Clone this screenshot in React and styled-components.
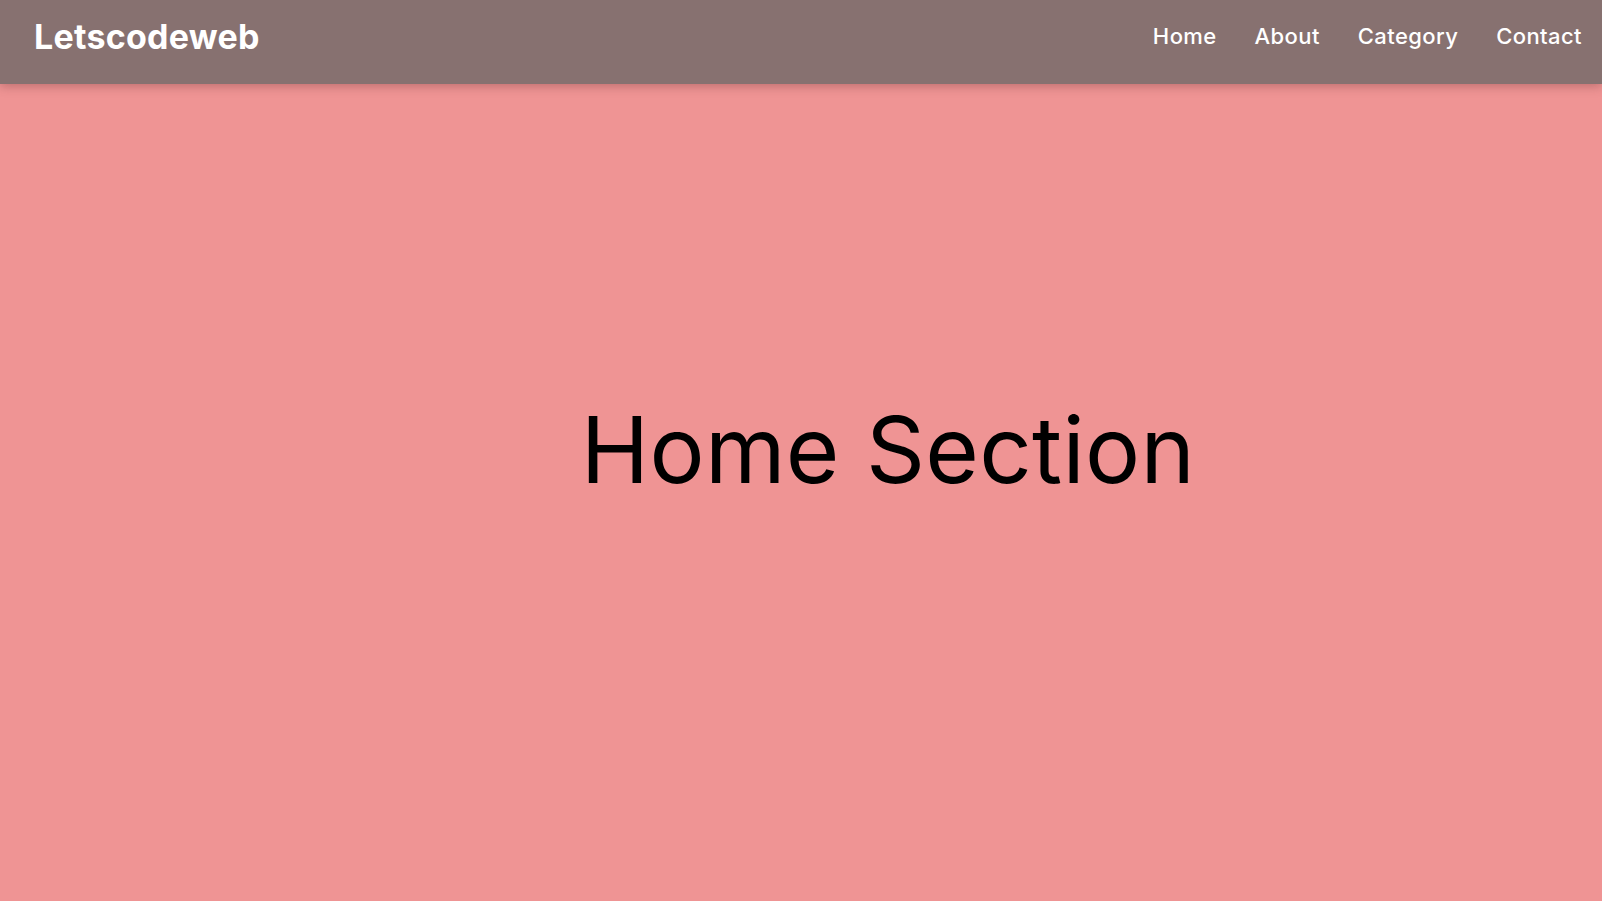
import styled, { createGlobalStyle } from 'styled-components'

const GlobalStyle = createGlobalStyle`
    * {
        box-sizing: border-box;
    }
    body {
        margin: 0;
        font-family: 'Inter', 'Noto Sans', sans-serif;
        background-color: #ef9494;
        overflow: hidden;
    }
`

const StyledHeader = styled.header`
    height: 84px;
    padding: 0 20px 12px 34px;
    display: flex;
    justify-content: space-between;
    align-items: center;
    background-color: #877170;
    box-shadow: 0 2px 10px rgba(90, 40, 40, 0.35);
    position: relative;
    z-index: 1;
`

const StyledLogo = styled.div`
    color: #ffffff;
    font-size: 34px;
    font-weight: 700;
    letter-spacing: 0.25px;
`

const StyledNav = styled.nav`
    display: flex;
    align-items: center;
    gap: 38px;
`

const StyledLink = styled.a`
    color: #ffffff;
    font-size: 22px;
    font-weight: 500;
    letter-spacing: 0.4px;
    text-decoration: none;
    cursor: pointer;
`

const StyledSection = styled.section`
    height: calc(100vh - 84px);
    padding: 0 0 86px 174px;
    display: flex;
    justify-content: center;
    align-items: center;
    background-color: #ef9494;
`

const StyledSectionTitle = styled.h1`
    margin: 0;
    font-size: 92px;
    font-weight: 400;
    letter-spacing: 0.3px;
    color: #000000;
`

const links = ['Home', 'About', 'Category', 'Contact']

export default function App(){
    return(
        <>
            <GlobalStyle />
            <StyledHeader>
                <StyledLogo>Letscodeweb</StyledLogo>
                <StyledNav>
                    {links.map(link=>{
                        return <StyledLink key={link}>{link}</StyledLink>
                    })}
                </StyledNav>
            </StyledHeader>
            <StyledSection>
                <StyledSectionTitle>Home Section</StyledSectionTitle>
            </StyledSection>
        </>
    )
}
